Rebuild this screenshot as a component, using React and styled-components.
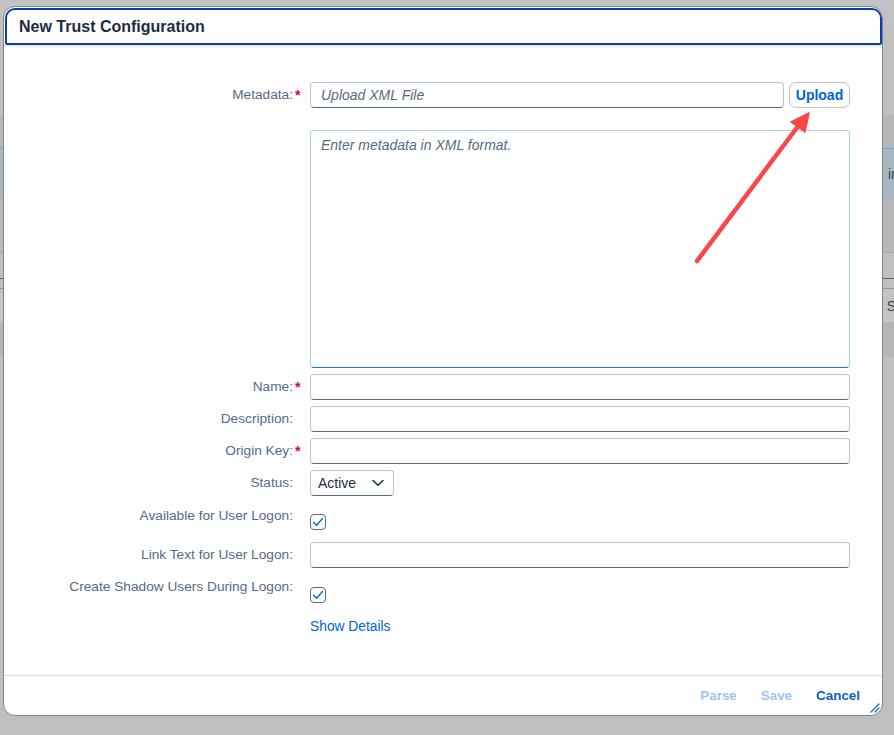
import React from "react";
import styled, { createGlobalStyle } from "styled-components";

const Global = createGlobalStyle`
  html, body { margin: 0; padding: 0; }
  body {
    background: #bdbfc1;
    font-family: "Liberation Sans", Arial, sans-serif;
    width: 894px;
    height: 735px;
    overflow: hidden;
  }
  #root { position: relative; width: 894px; height: 735px; }
`;

/* ---------- backdrop (dimmed page behind dialog) ---------- */
const Backdrop = styled.div`
  display: flex;
  flex-direction: column;
  width: 894px;
  height: 735px;
`;

const Band = styled.div`
  height: ${(p) => p.$h}px;
  background: ${(p) => p.$bg};
  border-top: ${(p) => (p.$top ? `1px solid ${p.$top}` : "none")};
  border-bottom: ${(p) => (p.$bottom ? `1px solid ${p.$bottom}` : "none")};
  box-sizing: border-box;
  display: flex;
  align-items: center;
  justify-content: flex-end;
  color: #3a4650;
  font-size: 14px;
  overflow: hidden;
`;

const BandText = styled.span`
  margin-right: ${(p) => p.$mr}px;
  white-space: nowrap;
`;

/* ---------- dialog ---------- */
const Dialog = styled.div`
  position: absolute;
  left: 3px;
  top: 6px;
  width: 880px;
  height: 710px;
  box-sizing: border-box;
  background: #fff;
  border: 1px solid #7e858c;
  border-radius: 12px;
  display: flex;
  flex-direction: column;
  overflow: hidden;
`;

const Header = styled.div`
  margin: 1px 0 0 1px;
  height: 37px;
  box-sizing: border-box;
  border: 2px solid #0b3ea6;
  border-radius: 10px 10px 2px 2px;
  display: flex;
  align-items: center;
  padding-left: 12px;
  flex-shrink: 0;
`;

const Title = styled.h1`
  margin: 0;
  font-size: 16px;
  font-weight: 700;
  color: #1d2d3e;
`;

const HeaderShadow = styled.div`
  height: 2px;
  background: linear-gradient(#e3e5e7, #f6f7f8);
  flex-shrink: 0;
`;

const Body = styled.div`
  flex: 1;
  padding-top: 35px;
`;

const Form = styled.div`
  display: grid;
  grid-template-columns: 298px 540px;
  column-gap: 8px;
  row-gap: 6px;
  align-items: start;
`;

const Label = styled.label`
  display: flex;
  justify-content: flex-end;
  align-items: flex-start;
  font-size: 13.7px;
  color: #556b82;
  line-height: 18px;
  padding-top: ${(p) => (p.$pt != null ? p.$pt : 4)}px;
  white-space: nowrap;
`;

const Req = styled.span`
  display: inline-block;
  width: 9px;
  padding-left: 2px;
  box-sizing: border-box;
  color: #d1005b;
  font-weight: 700;
  font-size: 14px;
`;

const Field = styled.div`
  display: flex;
  gap: 5px;
  margin-top: ${(p) => p.$mt || 0}px;
  min-height: ${(p) => p.$h || 0}px;
  align-items: ${(p) => (p.$top ? "flex-start" : "center")};
`;

const Input = styled.div`
  flex: ${(p) => (p.$grow ? 1 : "none")};
  height: 26px;
  box-sizing: border-box;
  border: 1px solid #bcc3ca;
  border-bottom-color: #556b82;
  border-radius: 4px;
  background: #fff;
  display: flex;
  align-items: center;
  padding: 0 10px;
  font-size: 14px;
  color: #1d2d3e;
`;

const Placeholder = styled.span`
  font-style: italic;
  color: #556b82;
`;

const TextArea = styled.div`
  flex: 1;
  height: 238px;
  box-sizing: border-box;
  border: 1px solid #a6cdfa;
  border-bottom: 1px solid #1a74d9;
  border-radius: 4px;
  padding: 6px 10px;
  font-size: 14px;
  line-height: 16px;
`;

const UploadButton = styled.button`
  width: 61px;
  height: 26px;
  box-sizing: border-box;
  border: 1px solid #bcc3ca;
  border-radius: 7px;
  background: #fff;
  color: #0064d9;
  font-family: inherit;
  font-weight: 700;
  font-size: 14px;
  padding: 0;
`;

const Select = styled.div`
  width: 84px;
  height: 26px;
  box-sizing: border-box;
  border: 1px solid #bcc3ca;
  border-bottom-color: #556b82;
  border-radius: 4px;
  display: flex;
  align-items: center;
  justify-content: space-between;
  padding: 0 9px 0 7px;
  font-size: 14px;
  color: #1d2d3e;
`;

const Check = styled.span`
  display: inline-flex;
  align-items: center;
  justify-content: center;
  width: 16px;
  height: 16px;
  box-sizing: border-box;
  border: 1px solid #556b82;
  border-radius: 4px;
  margin-top: ${(p) => p.$mt || 0}px;
`;

const Link = styled.a`
  font-size: 13.8px;
  line-height: 26px;
  color: #0064d9;
  text-decoration: none;
`;

const Footer = styled.div`
  height: 39px;
  flex-shrink: 0;
  border-top: 1px solid #d9dcdf;
  display: flex;
  justify-content: flex-end;
  align-items: center;
  gap: 8px;
  padding-right: 14px;
  position: relative;
`;

const FooterButton = styled.button`
  background: none;
  border: none;
  font-family: inherit;
  font-size: 13.4px;
  font-weight: 700;
  padding: 0 8px;
  height: 26px;
  color: ${(p) => (p.$disabled ? "#9fc4f0" : "#0a5fc4")};
`;

const Grip = styled.svg`
  position: absolute;
  right: 1px;
  bottom: 1px;
`;

const Arrow = styled.svg`
  position: absolute;
  left: 0;
  top: 0;
  pointer-events: none;
`;

const Chevron = () => (
  <svg width="12" height="8" viewBox="0 0 12 8">
    <path d="M1 1.5 L6 6.2 L11 1.5" fill="none" stroke="#1d2d3e" strokeWidth="1.5" strokeLinecap="round" strokeLinejoin="round" />
  </svg>
);

const Tick = () => (
  <svg width="12" height="10" viewBox="0 0 12 10">
    <path d="M1.5 5.2 L4.6 8.2 L10.5 1.5" fill="none" stroke="#0064d9" strokeWidth="1.3" strokeLinecap="round" strokeLinejoin="round" />
  </svg>
);

export default function App() {
  return (
    <>
      <Global />
      <Backdrop>
        <Band $h={30} $bg="#c2c2c2" />
        <Band $h={85} $bg="#bfbfbf" />
        <Band $h={33} $bg="#b5b7b9" />
        <Band $h={51} $bg="#a9b7c2" $top="#6fa6d8" $bottom="#8fb4d4">
          <BandText $mr={-8}>ini</BandText>
        </Band>
        <Band $h={54} $bg="#b6b8ba" $bottom="#a7a9ab" />
        <Band $h={26} $bg="#bdbfc0" $bottom="#5b6671" />
        <Band $h={10} $bg="#bdbfc0" $bottom="#8e9499" />
        <Band $h={33} $bg="#c3c4c5">
          <BandText $mr={-2}>S</BandText>
        </Band>
        <Band $h={35} $bg="#b4b6b8" />
        <Band $h={378} $bg="#bdbfc1" />
      </Backdrop>

      <Dialog>
        <Header>
          <Title>New Trust Configuration</Title>
        </Header>
        <HeaderShadow />
        <Body>
          <Form>
            <Label>Metadata:<Req>*</Req></Label>
            <Field $h={26}>
              <Input $grow><Placeholder>Upload XML File</Placeholder></Input>
              <UploadButton>Upload</UploadButton>
            </Field>

            <div />
            <Field $mt={16} $top>
              <TextArea><Placeholder>Enter metadata in XML format.</Placeholder></TextArea>
            </Field>

            <Label>Name:<Req>*</Req></Label>
            <Field><Input $grow /></Field>

            <Label>Description:<Req /></Label>
            <Field><Input $grow /></Field>

            <Label>Origin Key:<Req>*</Req></Label>
            <Field><Input $grow /></Field>

            <Label>Status:<Req /></Label>
            <Field>
              <Select>Active<Chevron /></Select>
            </Field>

            <Label $pt={5}>Available for User Logon:<Req /></Label>
            <Field $h={34} $top>
              <Check $mt={12}><Tick /></Check>
            </Field>

            <Label>Link Text for User Logon:<Req /></Label>
            <Field><Input $grow /></Field>

            <Label $pt={4}>Create Shadow Users During Logon:<Req /></Label>
            <Field $h={34} $top>
              <Check $mt={13}><Tick /></Check>
            </Field>

            <div />
            <Field>
              <Link href="#">Show Details</Link>
            </Field>
          </Form>
        </Body>
        <Footer>
          <FooterButton $disabled>Parse</FooterButton>
          <FooterButton $disabled>Save</FooterButton>
          <FooterButton>Cancel</FooterButton>
          <Grip width="14" height="14" viewBox="0 0 14 14">
            <path d="M4 12 L12 4 M8 12 L12 8" stroke="#2a6fd1" strokeWidth="1.4" strokeLinecap="round" />
          </Grip>
        </Footer>
      </Dialog>

      <Arrow width="894" height="735" viewBox="0 0 894 735">
        <line x1="697" y1="261" x2="799" y2="125" stroke="#fa4646" strokeWidth="4.5" strokeLinecap="round" />
        <polygon points="809,113 791,122 805,132" fill="#fa4646" stroke="#fa4646" strokeWidth="1.5" strokeLinejoin="round" />
      </Arrow>
    </>
  );
}
